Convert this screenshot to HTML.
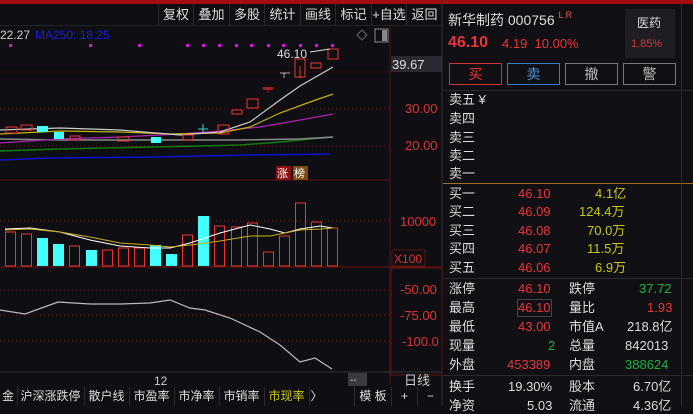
<!DOCTYPE html>
<html><head><meta charset="utf-8"><style>
*{margin:0;padding:0;box-sizing:border-box}
body{width:693px;height:406px;background:#0f0f13;overflow:hidden;position:relative;font-family:"Liberation Sans","Noto Sans CJK SC",sans-serif;color:#ddd}
.a{position:absolute;white-space:nowrap}
.tb{position:absolute;top:4px;height:21px;font-size:13px;color:#ddd;line-height:21px;border-left:1px solid #2a2a2e;text-align:center}
.r{color:#e8353b}.g{color:#19b33b}.y{color:#c8c81a}.w{color:#ddd}
.row{position:absolute;left:449px;font-size:13px;line-height:16px}
.btn{position:absolute;top:63px;width:53px;height:22px;border:1px solid #777;text-align:center;font-size:14px;line-height:20px;color:#bbb}
.tab{position:absolute;top:387px;height:19px;font-size:12px;line-height:19px;color:#ddd;border-left:1px solid #2a2a2e;text-align:center}
</style></head><body>
<div class="a" style="left:0;top:0;width:693px;height:4px;background:#a30d10"></div>
<div class="a" style="left:0;top:25px;width:443px;height:1px;background:#222"></div>
<div class="tb" style="left:158px;width:35px">复权</div>
<div class="tb" style="left:193px;width:36px">叠加</div>
<div class="tb" style="left:229px;width:35px">多股</div>
<div class="tb" style="left:264px;width:36px">统计</div>
<div class="tb" style="left:300px;width:35px">画线</div>
<div class="tb" style="left:335px;width:36px">标记</div>
<div class="tb" style="left:371px;width:35px">+自选</div>
<div class="tb" style="left:406px;width:36px">返回</div>
<svg class="a" style="left:0;top:0" width="443" height="406">
<line x1="390" y1="26" x2="390" y2="385" stroke="#4a1414"/>
<line x1="442" y1="0" x2="442" y2="406" stroke="#333"/>
<g stroke="#5a1515" stroke-dasharray="1,3"><line x1="0" y1="72" x2="390" y2="72"/><line x1="0" y1="109" x2="390" y2="109"/><line x1="0" y1="146" x2="390" y2="146"/><line x1="0" y1="221" x2="390" y2="221"/><line x1="0" y1="290" x2="390" y2="290"/><line x1="0" y1="315" x2="390" y2="315"/><line x1="0" y1="341" x2="390" y2="341"/></g>
<line x1="0" y1="180" x2="390" y2="180" stroke="#5a1010"/>
<line x1="0" y1="267" x2="442" y2="267" stroke="#6a1010"/>
<line x1="0" y1="372" x2="442" y2="372" stroke="#333"/>
<g fill="#e010e0"><rect x="9" y="44" width="3" height="3"/><rect x="89" y="44" width="3" height="3"/><rect x="138" y="44" width="3" height="3"/><rect x="186" y="44" width="3" height="3"/><rect x="202" y="44" width="3" height="3"/><rect x="218" y="44" width="3" height="3"/><rect x="235" y="44" width="3" height="3"/><rect x="250" y="44" width="3" height="3"/><rect x="267" y="44" width="3" height="3"/><rect x="282" y="44" width="3" height="3"/><rect x="299" y="44" width="3" height="3"/><rect x="315" y="44" width="3" height="3"/><rect x="331" y="44" width="3" height="3"/></g>
<polyline points="0,160 50,158 150,157 200,156 250,155 330,154" fill="none" stroke="#1010d0" stroke-width="1.5"/>
<polyline points="0,151 60,149 150,147 200,146 240,145 280,142 310,139 333,137" fill="none" stroke="#107a10" stroke-width="1.5"/>
<polyline points="0,139 60,140 150,140 240,140 300,139 333,137" fill="none" stroke="#888" stroke-width="1.5"/>
<polyline points="0,143 60,139 120,137 180,134 220,131 260,127 300,120 333,114" fill="none" stroke="#b020b0" stroke-width="1.2"/>
<polyline points="0,134 60,131 120,132 170,134 220,133 250,127 280,113 310,102 333,94" fill="none" stroke="#c0b010" stroke-width="1.2"/>
<polyline points="0,130 60,128 120,130 180,135 220,132 250,122 280,100 300,86 333,67" fill="none" stroke="#ccc" stroke-width="1.2"/>
<g fill="none" stroke="#e33"><rect x="6" y="127" width="11" height="6"/><rect x="21" y="125" width="11" height="5"/><rect x="70" y="136" width="10" height="4"/><rect x="118" y="137" width="11" height="4"/><rect x="183" y="135" width="10" height="5"/><rect x="218" y="125" width="11" height="9"/><rect x="232" y="110" width="10" height="4"/><rect x="247" y="99" width="11" height="9"/><rect x="295" y="59" width="10" height="18"/><line x1="300" y1="66" x2="300" y2="78"/><rect x="311" y="63" width="10" height="5"/><rect x="328" y="49" width="10" height="10"/></g>
<rect x="263" y="87" width="10" height="3" fill="#a02020"/><line x1="268" y1="90" x2="268" y2="93" stroke="#a02020"/>
<line x1="280" y1="73" x2="290" y2="73" stroke="#aaa"/><line x1="284" y1="73" x2="284" y2="78" stroke="#aaa"/>
<line x1="198" y1="129" x2="208" y2="129" stroke="#4cc"/><line x1="203" y1="124" x2="203" y2="133" stroke="#4cc"/>
<g fill="#4ff"><rect x="37" y="126" width="11" height="6"/><rect x="54" y="132" width="10" height="7"/><rect x="151" y="137" width="10" height="6"/></g>
<text x="277" y="58" font-size="12" fill="#ddd" font-family="Liberation Sans">46.10</text>
<line x1="310" y1="52" x2="330" y2="49" stroke="#ddd"/>
<rect x="276" y="166" width="15" height="14" fill="#8a1010"/><text x="277" y="177" font-size="11" fill="#fff">涨</text>
<rect x="293" y="166" width="15" height="14" fill="#7a4a10"/><text x="294" y="177" font-size="11" fill="#fff">榜</text>
<text x="391" y="69" font-size="0"></text>
<g fill="none" stroke="#e33">
<rect x="5.5" y="232" width="10" height="34"/><rect x="21.5" y="234" width="10" height="32"/><rect x="69.5" y="246" width="10" height="20"/><rect x="102.5" y="250" width="10" height="16"/><rect x="118.5" y="248" width="10" height="18"/><rect x="134.5" y="248" width="10" height="18"/><rect x="182.5" y="235" width="10" height="31"/><rect x="214.5" y="226" width="10" height="40"/><rect x="231.5" y="227" width="10" height="39"/><rect x="247.5" y="223" width="10" height="43"/><rect x="263.5" y="252" width="10" height="14"/><rect x="279.5" y="236" width="10" height="30"/><rect x="295.5" y="203" width="10" height="63"/><rect x="311.5" y="222" width="10" height="44"/><rect x="327.5" y="228" width="10" height="38"/></g>
<g fill="#4ff"><rect x="37" y="238" width="11" height="28"/><rect x="53" y="244" width="11" height="22"/><rect x="86" y="250" width="11" height="16"/><rect x="150" y="245" width="11" height="21"/><rect x="166" y="254" width="11" height="12"/><rect x="198" y="216" width="11" height="50"/></g>
<polyline points="5,229 30,228 60,232 90,240 120,246 150,248 170,248 190,243 220,233 250,225 270,229 285,233 300,229 320,226 333,228" fill="none" stroke="#fff" stroke-width="1"/>
<polyline points="5,230 30,229 60,232 90,237 120,243 150,245 170,247 190,245 220,241 250,236 270,236 285,233 300,230 320,229 333,228" fill="none" stroke="#c8b010" stroke-width="1"/>
<polyline points="0,310 25,314 58,302 90,304 120,304 150,303 170,300 190,308 205,310 230,318 260,332 280,345 300,362 315,358 332,369" fill="none" stroke="#bbb" stroke-width="1.2"/>
<rect x="391" y="56" width="51" height="16" fill="#2a2a30"/>
<text x="392" y="69" font-size="13" fill="#ddd">39.67</text>
<g font-size="13" fill="#d33"><text x="405" y="113">30.00</text><text x="405" y="150">20.00</text><text x="400" y="226">10000</text><text x="400" y="294">-50.00</text><text x="400" y="320">-75.00</text><text x="402" y="346">-100.0</text></g>
<rect x="392" y="250" width="33" height="16" fill="none" stroke="#5a1515"/><text x="394" y="263" font-size="12" fill="#d33">X100</text>
<rect x="391" y="268" width="51" height="107" fill="none" stroke="#5a1515"/>
<text x="154" y="385" font-size="12" fill="#ccc">12</text>
<rect x="348" y="373" width="19" height="13" fill="#3a3a40"/><text x="350" y="383" font-size="10" fill="#ccc">--</text>
<text x="404" y="385" font-size="13" fill="#ccc">日线</text>
<text x="0" y="39" font-size="12" fill="#ccc">22.27</text><text x="35" y="39" font-size="12" fill="#1a1ae0">MA250: 18.25</text>
<path d="M362 30 l5 5 -5 5 -5 -5z" fill="none" stroke="#666"/><rect x="375" y="29" width="13" height="13" fill="none" stroke="#888"/><rect x="382" y="30" width="5" height="11" fill="#888"/>
</svg>
<div class="tab" style="left:0;width:16px;border:none">金</div>
<div class="tab" style="left:17px;width:66px">沪深涨跌停</div>
<div class="tab" style="left:84px;width:44px">散户线</div>
<div class="tab" style="left:129px;width:44px">市盈率</div>
<div class="tab" style="left:174px;width:44px">市净率</div>
<div class="tab" style="left:219px;width:44px">市销率</div>
<div class="tab" style="left:264px;width:44px;color:#c8c81a">市现率</div>
<div class="tab" style="left:309px;width:14px">〉</div>
<div class="tab" style="left:354px;width:37px">模 板</div>
<div class="tab" style="left:391px;width:26px">+</div>
<div class="tab" style="left:417px;width:26px">−</div>
<!-- right -->
<div class="a" style="left:443px;top:4px;width:250px;height:402px;background:#101014"></div>
<div class="a" style="left:448px;top:10px;font-size:14px;color:#ddd">新华制药 000756 <span style="font-size:9px;color:#e55;vertical-align:top">L R</span></div>
<div class="a" style="left:448px;top:34px;font-size:16px;font-weight:bold;color:#e8353b">46.10</div>
<div class="a" style="left:502px;top:36px;font-size:13px;color:#e8353b">4.19&nbsp;&nbsp;10.00%</div>
<div class="a" style="left:625px;top:9px;width:50px;height:49px;background:#1d1d22"></div>
<div class="a" style="left:637px;top:14px;font-size:12px;color:#ddd">医药</div>
<div class="a" style="left:631px;top:38px;font-size:11px;color:#d33">1.85%</div>
<div class="btn" style="left:449px;border-color:#c33;color:#e33">买</div>
<div class="btn" style="left:507px;border-color:#3a7ac0;color:#4a90d8">卖</div>
<div class="btn" style="left:565px">撤</div>
<div class="btn" style="left:623px">警</div>
<div class="a" style="left:443px;top:90px;width:250px;height:1px;background:#2a2a2e"></div>
<div class="row" style="top:92px">卖五 ¥</div>
<div class="row" style="top:111px">卖四</div>
<div class="row" style="top:130px">卖三</div>
<div class="row" style="top:148px">卖二</div>
<div class="row" style="top:166px">卖一</div>
<div class="a" style="left:443px;top:183px;width:250px;height:1px;background:#a07020"></div>
<div class="row" style="top:186px">买一</div><div class="row r" style="top:186px;left:518px">46.10</div><div class="row y" style="top:186px;left:595px">4.1亿</div>
<div class="row" style="top:204px">买二</div><div class="row r" style="top:204px;left:518px">46.09</div><div class="row y" style="top:204px;left:579px">124.4万</div>
<div class="row" style="top:223px">买三</div><div class="row r" style="top:223px;left:518px">46.08</div><div class="row y" style="top:223px;left:587px">70.0万</div>
<div class="row" style="top:241px">买四</div><div class="row r" style="top:241px;left:518px">46.07</div><div class="row y" style="top:241px;left:587px">11.5万</div>
<div class="row" style="top:260px">买五</div><div class="row r" style="top:260px;left:518px">46.06</div><div class="row y" style="top:260px;left:595px">6.9万</div>
<div class="a" style="left:443px;top:278px;width:250px;height:1px;background:#2a2a2e"></div>
<div class="row" style="top:281px">涨停</div><div class="row r" style="top:281px;left:518px">46.10</div><div class="row" style="top:281px;left:569px">跌停</div><div class="row g" style="top:281px;left:639px">37.72</div>
<div class="row" style="top:300px">最高</div><div class="row r" style="top:300px;left:518px;outline:1px solid #444">46.10</div><div class="row" style="top:300px;left:569px">量比</div><div class="row r" style="top:300px;left:647px">1.93</div>
<div class="row" style="top:319px">最低</div><div class="row r" style="top:319px;left:518px">43.00</div><div class="row" style="top:319px;left:569px">市值A</div><div class="row" style="top:319px;left:627px">218.8亿</div>
<div class="row" style="top:338px">现量</div><div class="row g" style="top:338px;left:548px">2</div><div class="row" style="top:338px;left:569px">总量</div><div class="row" style="top:338px;left:625px">842013</div>
<div class="row" style="top:357px">外盘</div><div class="row r" style="top:357px;left:507px">453389</div><div class="row" style="top:357px;left:569px">内盘</div><div class="row g" style="top:357px;left:625px">388624</div>
<div class="a" style="left:443px;top:375px;width:250px;height:1px;background:#2a2a2e"></div>
<div class="row" style="top:379px">换手</div><div class="row" style="top:379px;left:508px">19.30%</div><div class="row" style="top:379px;left:569px">股本</div><div class="row" style="top:379px;left:633px">6.70亿</div>
<div class="row" style="top:398px">净资</div><div class="row" style="top:398px;left:527px">5.03</div><div class="row" style="top:398px;left:569px">流通</div><div class="row" style="top:398px;left:633px">4.36亿</div>
<div class="a" style="left:681px;top:4px;width:1px;height:402px;background:#2a2a2e"></div>
</body></html>
